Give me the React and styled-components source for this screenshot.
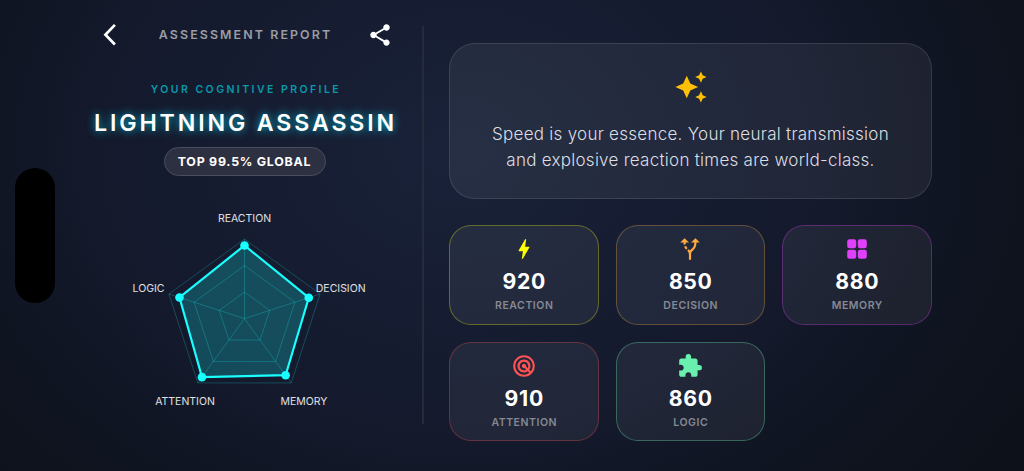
import styled, { createGlobalStyle } from "styled-components";
import {
  MdShare,
  MdAutoAwesome,
  MdBolt,
  MdAltRoute,
  MdRadar,
  MdExtension,
} from "react-icons/md";

const GlobalStyle = createGlobalStyle`
  * {
    box-sizing: border-box;
  }

  body {
    margin: 0;
    overflow: hidden;
    background: #0f1522;
    font-family: Inter, "Liberation Sans", sans-serif;
  }
`;

const Screen = styled.div`
  position: relative;
  display: flex;
  width: 1024px;
  height: 471px;
  padding-left: 82px;
  background: radial-gradient(
    ellipse 660px 520px at 45% 32%,
    #192239 0%,
    #14192c 55%,
    #0e131e 85%,
    #0d111a 100%
  );
`;

const Island = styled.div`
  position: absolute;
  left: 15px;
  top: 168px;
  width: 39.5px;
  height: 134.5px;
  border-radius: 20px;
  background: #000;
`;

const Profile = styled.section`
  display: flex;
  flex-direction: column;
  align-items: center;
  width: 325px;
`;

const TopBar = styled.header`
  display: flex;
  align-items: center;
  justify-content: space-between;
  width: 100%;
  height: 70px;
  padding: 0 14px 0 20px;
  color: #fff;

  svg {
    display: block;
  }
`;

const Title = styled.h1`
  margin: 0;
  padding-left: 2px;
  font-size: 12.4px;
  font-weight: 600;
  line-height: 16px;
  letter-spacing: 2.1px;
  color: #9b9da4;
  white-space: nowrap;
`;

const Eyebrow = styled.div`
  margin-top: 12px;
  padding-left: 3px;
  font-size: 10.5px;
  font-weight: 600;
  line-height: 16px;
  letter-spacing: 2.45px;
  color: #0899ab;
  white-space: nowrap;
`;

const ProfileName = styled.h2`
  margin: 10px 0 0;
  padding-left: 2px;
  font-size: 23.2px;
  font-weight: 600;
  line-height: 30px;
  letter-spacing: 2.85px;
  color: #fff;
  white-space: nowrap;
  text-shadow: 0 0 9px #00b8d4;
`;

const Rank = styled.div`
  display: flex;
  align-items: center;
  justify-content: center;
  width: 162px;
  height: 29px;
  margin-top: 9px;
  border: 1px solid #4a4d5b;
  border-radius: 15px;
  background: #2d3040;
  font-size: 12.4px;
  font-weight: 700;
  letter-spacing: 0.75px;
  color: #fff;
`;

const Chart = styled.svg`
  display: block;
  margin-top: 24px;

  text {
    font-size: 10.5px;
    fill: #e0e1e4;
    text-anchor: middle;
  }
`;

const Divider = styled.div`
  width: 2px;
  height: 398px;
  margin: 26px 0 0 15px;
  background: #252b3a;
`;

const Results = styled.section`
  width: 483px;
  margin: 43px 0 0 25px;
`;

const Summary = styled.article`
  display: flex;
  flex-direction: column;
  align-items: center;
  height: 156px;
  padding-top: 26px;
  border: 1px solid rgba(255, 255, 255, 0.11);
  border-radius: 26px;
  background: rgba(255, 255, 255, 0.06);
  color: #ffc107;
`;

const SummaryText = styled.p`
  margin: 17px 0 0;
  font-size: 17px;
  font-weight: 300;
  line-height: 26px;
  letter-spacing: 0.27px;
  text-align: center;
  color: #dcdee2;
  white-space: nowrap;
`;

const ScoreGrid = styled.div`
  display: grid;
  grid-template-columns: repeat(3, 149.5px);
  grid-auto-rows: 99.5px;
  gap: 17px;
  margin-top: 26px;
`;

const ScoreCard = styled.article`
  display: flex;
  flex-direction: column;
  align-items: center;
  padding-top: 10px;
  border: 1px solid ${({ $border }) => $border};
  border-radius: 22px;
  background: rgba(255, 255, 255, 0.06);
  color: ${({ $color }) => $color};
`;

const Score = styled.strong`
  margin-top: 6px;
  padding-left: 1px;
  font-size: 21.2px;
  font-weight: 650;
  line-height: 26px;
  letter-spacing: 0.7px;
  color: #fff;
`;

const ScoreLabel = styled.span`
  margin-top: 5px;
  padding-left: 1px;
  font-size: 10.5px;
  font-weight: 600;
  line-height: 14px;
  letter-spacing: 0.55px;
  color: #868994;
`;

const BackIcon = () => (
  <svg width="20" height="26" viewBox="0 0 20 26" fill="none">
    <path d="M12.9 2.9 3.4 12.7l9.5 9.8" stroke="currentColor" strokeWidth="2.7" />
  </svg>
);

const GridIcon = ({ size }) => (
  <svg width={size} height={size} viewBox="0 0 26 26" fill="currentColor">
    <rect x="3.2" y="3.2" width="9" height="9" rx="2.2" />
    <rect x="13.8" y="3.2" width="9" height="9" rx="2.2" />
    <rect x="3.2" y="13.8" width="9" height="9" rx="2.2" />
    <rect x="13.8" y="13.8" width="9" height="9" rx="2.2" />
  </svg>
);

const scores = [
  { label: "REACTION", value: 920, color: "#ffff00", border: "rgba(255,255,0,.3)", Icon: MdBolt },
  { label: "DECISION", value: 850, color: "#ffab40", border: "rgba(255,171,64,.3)", Icon: MdAltRoute },
  { label: "MEMORY", value: 880, color: "#e040fb", border: "rgba(224,64,251,.3)", Icon: GridIcon },
  { label: "ATTENTION", value: 910, color: "#ff5252", border: "rgba(255,82,82,.3)", Icon: MdRadar },
  { label: "LOGIC", value: 860, color: "#69f0ae", border: "rgba(105,240,174,.33)", Icon: MdExtension },
];

// Radar geometry
const CX = 122.5;
const CY = 118.6;
const RADIUS = 79.5;

const point = (index, radius) => {
  const angle = (index * 72 - 90) * (Math.PI / 180);
  return [CX + radius * Math.cos(angle), CY + radius * Math.sin(angle)];
};

const ring = (radius) => [0, 1, 2, 3, 4].map((i) => point(i, radius).join(",")).join(" ");

const chartLabels = [
  { text: "REACTION", x: 122.5, y: 22.3 },
  { text: "DECISION", x: 218.7, y: 92.3 },
  { text: "MEMORY", x: 182, y: 205 },
  { text: "ATTENTION", x: 63, y: 205 },
  { text: "LOGIC", x: 26.5, y: 92.3 },
];

const RadarChart = () => {
  const values = scores.map((score, i) => point(i, (score.value / 1000) * RADIUS));

  return (
    <Chart width="245" height="220" viewBox="0 0 245 220" overflow="visible">
      <polygon
        points={values.join(" ")}
        fill="#18ffff"
        fillOpacity="0.22"
      />
      <g stroke="#18ffff" strokeOpacity="0.22" fill="none">
        {[1, 2, 3].map((n) => (
          <polygon key={n} points={ring((RADIUS * n) / 3)} />
        ))}
        {[0, 1, 2, 3, 4].map((i) => {
          const [x, y] = point(i, RADIUS);
          return <line key={i} x1={CX} y1={CY} x2={x} y2={y} />;
        })}
      </g>
      <polygon points={values.join(" ")} fill="none" stroke="#18ffff" strokeWidth="2.2" />
      {values.map(([x, y], i) => (
        <circle key={i} cx={x} cy={y} r="4.3" fill="#18ffff" />
      ))}
      {chartLabels.map(({ text, x, y }) => (
        <text key={text} x={x} y={y}>
          {text}
        </text>
      ))}
    </Chart>
  );
};

const App = () => {
  return (
    <>
      <GlobalStyle />
      <Screen>
        <Island />
        <Profile>
          <TopBar>
            <BackIcon />
            <Title>ASSESSMENT REPORT</Title>
            <MdShare size={26} />
          </TopBar>
          <Eyebrow>YOUR COGNITIVE PROFILE</Eyebrow>
          <ProfileName>LIGHTNING ASSASSIN</ProfileName>
          <Rank>TOP 99.5% GLOBAL</Rank>
          <RadarChart />
        </Profile>
        <Divider />
        <Results>
          <Summary>
            <MdAutoAwesome size={34} />
            <SummaryText>
              Speed is your essence. Your neural transmission
              <br />
              and explosive reaction times are world-class.
            </SummaryText>
          </Summary>
          <ScoreGrid>
            {scores.map(({ label, value, color, border, Icon }) => (
              <ScoreCard key={label} $color={color} $border={border}>
                <Icon size={26} />
                <Score>{value}</Score>
                <ScoreLabel>{label}</ScoreLabel>
              </ScoreCard>
            ))}
          </ScoreGrid>
        </Results>
      </Screen>
    </>
  );
};

export default App;
